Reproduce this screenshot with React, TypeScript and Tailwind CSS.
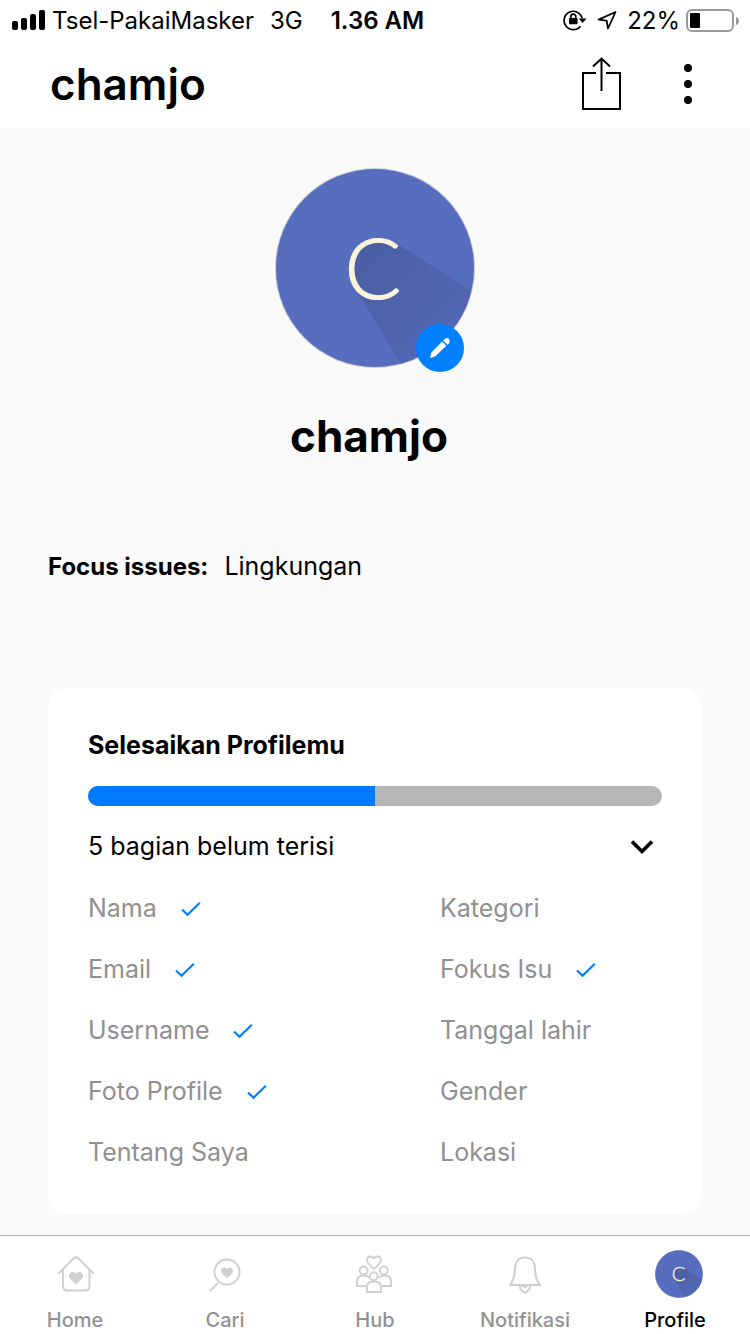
import { useId, useState } from "react";
import type { ReactNode } from "react";

type Field = { label: string; done: boolean };

const leftFields: Field[] = [
  { label: "Nama", done: true },
  { label: "Email", done: true },
  { label: "Username", done: true },
  { label: "Foto Profile", done: true },
  { label: "Tentang Saya", done: false },
];

const rightFields: Field[] = [
  { label: "Kategori", done: false },
  { label: "Fokus Isu", done: true },
  { label: "Tanggal lahir", done: false },
  { label: "Gender", done: false },
  { label: "Lokasi", done: false },
];

const HEART =
  "M0 6.5C-3.5 3.5 -7 1 -7 -2.4C-7 -4.8 -5.3 -6 -3.6 -6C-2 -6 -0.7 -5.200 0 -4C0.7 -5.200 2 -6 3.600 -6C5.300 -6 7 -4.800 7 -2.400C7 1 3.500 3.500 0 6.500Z";

function Avatar({ className }: { className: string }) {
  const id = useId();
  return (
    <svg viewBox="0 0 200 200" className={className} aria-hidden="true">
      <defs>
        <linearGradient id={`${id}g`} gradientUnits="userSpaceOnUse" x1="85" y1="80" x2="170" y2="165">
          <stop offset="0" stopColor="#4b5fa5" />
          <stop offset="1" stopColor="#5267b2" />
        </linearGradient>
        <clipPath id={`${id}c`}>
          <circle cx="100" cy="100" r="99" />
        </clipPath>
      </defs>
      <circle cx="100" cy="100" r="100" fill="#c9cbd6" />
      <circle cx="100" cy="100" r="99" fill="#566ebd" />
      <path
        d="M122 76L210 131V210H134L80 120C73 106 74 90 84 80C94 69 112 69 122 76Z"
        fill={`url(#${id}g)`}
        clipPath={`url(#${id}c)`}
      />
      <text
        x="98"
        y="131"
        textAnchor="middle"
        fontSize="84"
        className="font-['Lato',sans-serif] font-light"
        fill="#faf4dc"
        stroke="#faf4dc"
        strokeWidth="1.200"
      >
        C
      </text>
    </svg>
  );
}

function StatusBar() {
  return (
    <div className="flex h-10 items-center pl-3 pr-[10px] text-2xl leading-none">
      <svg width="34" height="22" viewBox="0 0 34 22" aria-hidden="true">
        <rect x="0" y="12" width="6" height="9" rx="2" />
        <rect x="9" y="9" width="6" height="12" rx="2" />
        <rect x="18" y="5" width="6" height="16" rx="2" />
        <rect x="27" y="1" width="6" height="20" rx="2" />
      </svg>
      <span className="ml-1.5 pt-0.5">Tsel-PakaiMasker</span>
      <span className="ml-4 pt-0.5">3G</span>
      <span className="ml-7 pt-0.5 font-semibold">1.36 AM</span>
      <span className="ml-auto flex items-center">
        <svg width="24" height="22" viewBox="0 0 24 22" fill="none" stroke="#000" strokeWidth="1.700" aria-hidden="true">
          <path d="M17.500 17.200A9.200 9.200 0 1 1 19.200 9.300" />
          <path d="M15.800 9.600H23.500L19.600 14Z" fill="#000" stroke="none" />
          <rect x="6" y="9" width="8.600" height="6.300" rx="1" fill="#000" stroke="none" />
          <path d="M7.800 9.500V7.700a2.500 2.500 0 0 1 5 0V9.500" />
        </svg>
        <svg className="ml-2.5" width="20" height="20" viewBox="0 0 20 20" fill="none" stroke="#000" strokeWidth="1.800" strokeLinejoin="round" aria-hidden="true">
          <path d="M18.500 2L1.600 9.600L9.600 10.600L11 18.500Z" />
        </svg>
        <span className="ml-2.5 pt-0.5">22%</span>
        <svg className="ml-1.5" width="54" height="24" viewBox="0 0 54 24" aria-hidden="true">
          <rect x="1" y="2" width="46" height="21" rx="5" fill="none" stroke="#999" strokeWidth="2" />
          <rect x="4" y="5" width="10" height="15" rx="1" />
          <path d="M50 9C54 10 54 16 50 17Z" fill="#999" />
        </svg>
      </span>
    </div>
  );
}

function Check() {
  return (
    <svg width="20" height="16" viewBox="0 0 20 16" fill="none" stroke="#0080ff" strokeWidth="2.200" aria-label="terisi">
      <path d="M1 8.500L6.500 13.800L18.800 1.800" />
    </svg>
  );
}

function FieldList({ fields, className }: { fields: Field[]; className: string }) {
  return (
    <ul className={`flex flex-col gap-[25px] ${className}`}>
      {fields.map((f) => (
        <li key={f.label} className="flex h-9 items-center gap-6">
          {f.label}
          {f.done && <Check />}
        </li>
      ))}
    </ul>
  );
}

function NavIcon({ children }: { children: ReactNode }) {
  return (
    <svg
      width="48"
      height="48"
      viewBox="0 0 48 48"
      fill="none"
      stroke="#d0d0d0"
      strokeWidth="2"
      strokeLinecap="round"
      strokeLinejoin="round"
      aria-hidden="true"
    >
      {children}
    </svg>
  );
}

const tabs: { label: string; icon: ReactNode; active?: boolean }[] = [
  {
    label: "Home",
    icon: (
      <NavIcon>
        <path d="M8 23L22.500 8.500Q25 6.200 27.500 8.500L42 23" />
        <path d="M12 20V36Q12 40.500 16.500 40.500H34Q38.500 40.500 38.500 36V20" />
        <path d={HEART} transform="translate(25 28)" fill="#d0d0d0" stroke="none" />
      </NavIcon>
    ),
  },
  {
    label: "Cari",
    icon: (
      <NavIcon>
        <circle cx="26" cy="22" r="12.500" />
        <path d="M16.500 33.500L9.500 40.500" />
        <path d={HEART} transform="translate(26 22.500) scale(.85)" fill="#d0d0d0" stroke="none" />
      </NavIcon>
    ),
  },
  {
    label: "Hub",
    icon: (
      <NavIcon>
        <path d={HEART} transform="translate(23 12.500)" strokeWidth="1.800" />
        <g strokeWidth="1.900" strokeLinecap="butt">
          <circle cx="12.600" cy="20.500" r="4" />
          <circle cx="32.800" cy="20.500" r="4" />
          <circle cx="22.700" cy="26.300" r="4" />
          <path d="M15.500 36H6V31Q6 25.500 12.500 25.500Q16.500 25.500 18.500 28" />
          <path d="M30.500 36H40V31Q40 25.500 33 25.500Q29.500 25.500 27.500 28" />
          <path d="M16 42V37Q16 31.500 22.800 31.500Q30 31.500 30 37V42Z" />
        </g>
      </NavIcon>
    ),
  },
  {
    label: "Notifikasi",
    icon: (
      <NavIcon>
        <path d="M9 35Q14 29 14 18.500C14 11.500 18 7.500 24 7.500S34 11.500 34 18.500Q34 29 39 35Z" />
        <path d="M19.500 35.500C17.500 39 21 40.500 24 43C27 40.500 30.500 39 28.500 35.500M22 35.800L24 37.200L26 35.800" />
      </NavIcon>
    ),
  },
  { label: "Profile", icon: <Avatar className="ml-2 size-12" />, active: true },
];

export default function App() {
  const [open, setOpen] = useState(true);
  return (
    <div className="flex min-h-screen flex-col bg-white font-['Inter',sans-serif] text-black">
      <StatusBar />
      <header className="flex h-22 items-center justify-between pl-[50px] pr-[50px]">
        <h1 className="text-[44px] font-semibold leading-none">chamjo</h1>
        <div className="flex items-center gap-[45px]">
          <button aria-label="Bagikan" className="flex size-15 items-center justify-center">
            <svg width="40" height="54" viewBox="0 0 40 54" fill="none" stroke="#000" strokeWidth="2">
              <path d="M15 16H2V52H39V16H25" />
              <path d="M20.500 34V2.500M12 9.500L20.500 1.500L29 9.500" />
            </svg>
          </button>
          <button aria-label="Menu" className="flex h-15 w-6 items-center justify-center">
            <svg width="8" height="40" viewBox="0 0 8 40">
              <circle cx="4" cy="4" r="4" />
              <circle cx="4" cy="20" r="4" />
              <circle cx="4" cy="36" r="4" />
            </svg>
          </button>
        </div>
      </header>

      <main className="flex-1 bg-[#fafafa] px-12 pt-10 pb-5 text-[25px]">
        <div className="relative mx-auto size-50">
          <Avatar className="size-50" />
          <button
            aria-label="Ubah foto"
            className="absolute right-[11px] bottom-[-4px] flex size-12 items-center justify-center rounded-full bg-[#0080ff]"
          >
            <svg width="22" height="22" viewBox="0 0 22 22" fill="#fff">
              <path d="M1 21L2.300 15.500L13.200 4.600L17.300 8.700L6.400 19.300Z" />
              <path d="M14.200 3.600L15.800 2Q18 0.200 20 2Q21.700 4 20 6.200L18.300 7.700Z" />
            </svg>
          </button>
        </div>
        <h2 className="mt-10 pr-3 text-center text-[44px] font-bold leading-[56px]">chamjo</h2>
        <p className="mt-[85px] flex h-9 items-center gap-4">
          <strong className="text-2xl font-bold">Focus issues:</strong>
          <span>Lingkungan</span>
        </p>

        <section className="mt-[103px] rounded-[20px] bg-white px-10 pt-[41px] pb-[43px]">
          <h3 className="h-8 font-bold leading-8">Selesaikan Profilemu</h3>
          <div
            role="progressbar"
            aria-valuenow={50}
            aria-valuemin={0}
            aria-valuemax={100}
            className="mt-[25px] h-5 overflow-hidden rounded-full bg-[#b6b6b6]"
          >
            <div className="h-full w-1/2 bg-[#007aff]" />
          </div>
          <button
            aria-expanded={open}
            onClick={() => setOpen(!open)}
            className="mt-[23px] flex h-9 w-full items-center justify-between pr-2"
          >
            <span>5 bagian belum terisi</span>
            <svg width="24" height="16" viewBox="0 0 24 16" fill="none" stroke="#000" strokeWidth="3.600">
              <path d="M2 2.500L12 12.500L22 2.500" />
            </svg>
          </button>
          {open && (
            <div className="mt-[26px] flex text-[#909090]">
              <FieldList fields={leftFields} className="w-[352px]" />
              <FieldList fields={rightFields} className="flex-1" />
            </div>
          )}
        </section>
      </main>

      <nav className="grid grid-cols-5 border-t border-[#b0b0b0] bg-white pt-[14px]">
        {tabs.map((t) => (
          <a key={t.label} href={`#${t.label.toLowerCase()}`} className="flex flex-col items-center">
            {t.icon}
            <span className={t.active ? "mt-2 text-xl font-medium leading-7" : "mt-2 text-xl font-medium leading-7 text-[#929292]"}>
              {t.label}
            </span>
          </a>
        ))}
      </nav>
    </div>
  );
}
